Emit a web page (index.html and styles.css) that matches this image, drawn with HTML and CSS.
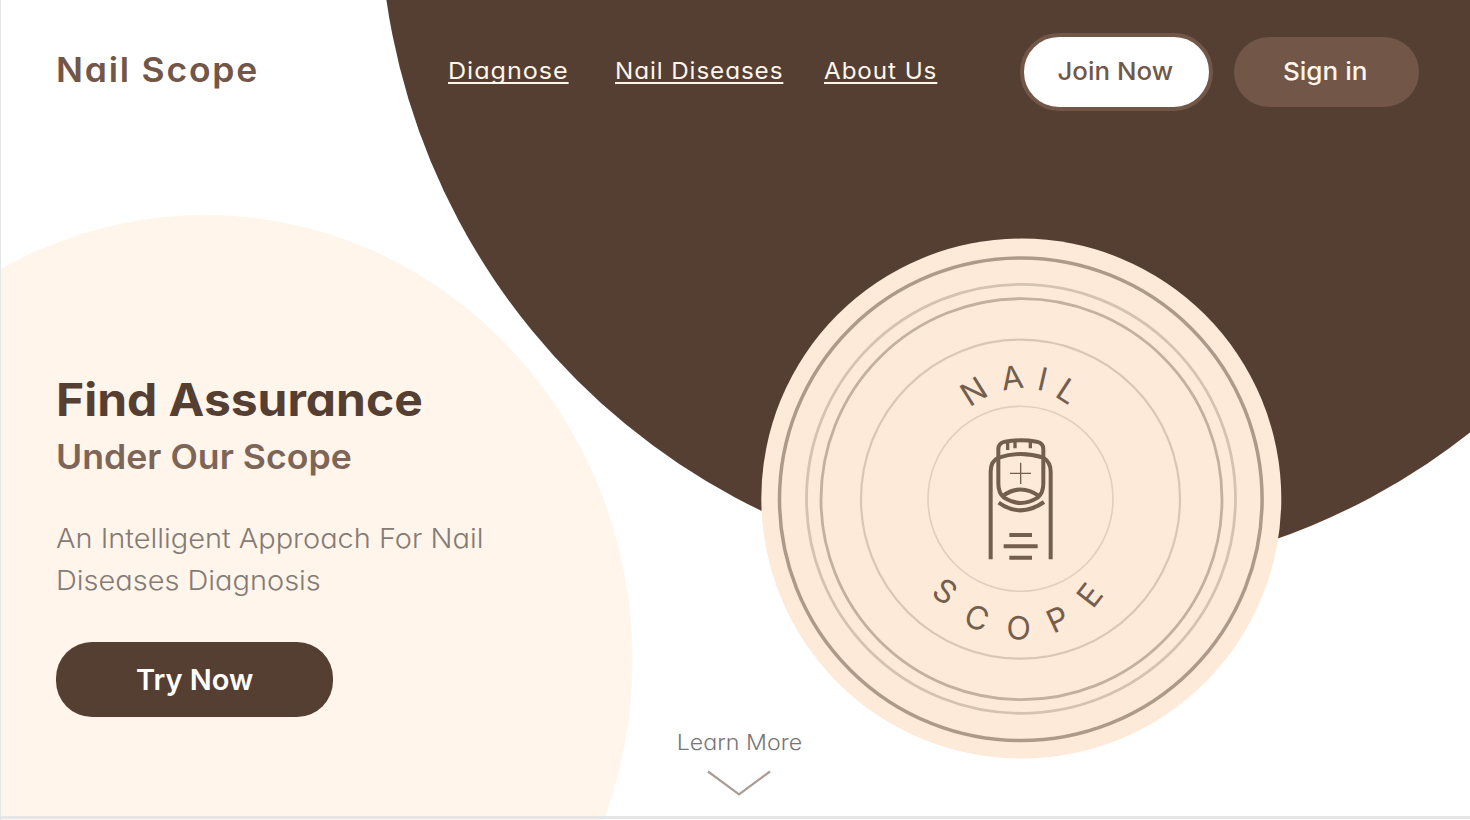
FILE: index.html
```html
<!DOCTYPE html>
<html lang="en">
<head>
<meta charset="utf-8">
<title>Nail Scope</title>
<link rel="stylesheet" href="styles.css">
</head>
<body>
<div class="page">
  <svg class="backdrop" viewBox="0 0 1470 820" aria-hidden="true">
    <ellipse cx="205" cy="660" rx="427.5" ry="445" fill="#fff5ea"/>
    <circle cx="1053" cy="-96.3" r="673.5" fill="#553f32"/>
  </svg>
  <header class="header">
    <a class="brand">Nail Scope</a>
    <nav class="nav">
      <a class="link link-diagnose">Diagnose</a>
      <a class="link link-diseases">Nail Diseases</a>
      <a class="link link-about">About Us</a>
    </nav>
    <div class="actions">
      <button class="btn btn-join"><span class="label label-join">Join Now</span></button>
      <button class="btn btn-sign"><span class="label label-sign">Sign in</span></button>
    </div>
  </header>
  <main class="main">
    <section class="hero">
      <h1 class="title">Find Assurance</h1>
      <h2 class="subtitle">Under Our Scope</h2>
      <p class="lead">An Intelligent Approach For Nail<br>Diseases Diagnosis</p>
      <button class="btn-try"><span class="label label-try">Try Now</span></button>
    </section>
    <a class="more">
      <span class="more-text">Learn More</span>
      <svg class="chevron" width="66" height="28" viewBox="0 0 66 28"><path d="M2 2.5 33 25.5 64 2.5" fill="none" stroke="#aa9d97" stroke-width="2.2"/></svg>
    </a>
    <svg class="seal" width="522" height="522" viewBox="760 238 522 522">
      <circle cx="1021.3" cy="498.6" r="260" fill="#fdead8"/>
      <g fill="none">
        <circle cx="1020.8" cy="499.3" r="241.3" stroke="#ae9a8a" stroke-width="3.5"/>
        <circle cx="1021" cy="498.8" r="214.5" stroke="#d6c2b0" stroke-width="2.8"/>
        <circle cx="1021.5" cy="499.2" r="200.5" stroke="#c4b09e" stroke-width="2.8"/>
        <circle cx="1020.5" cy="499.2" r="159.5" stroke="#d9c7b6" stroke-width="2.2"/>
        <circle cx="1020.5" cy="498.8" r="92.5" stroke="#e0cfbf" stroke-width="1.6"/>
      </g>
      <g class="seal-text">
        <text transform="translate(973.7 391.3) rotate(-32)" y="11.5">N</text>
        <text transform="translate(1012 377.5) rotate(-8)" y="11.5">A</text>
        <text transform="translate(1042.7 379) rotate(13)" y="11.5">I</text>
        <text transform="translate(1067.5 391) rotate(33)" y="11.5">L</text>
        <text transform="translate(945 591.3) rotate(36)" y="11.5">S</text>
        <text transform="translate(977 617.7) rotate(20)" y="11.5">C</text>
        <text transform="translate(1018.7 628) rotate(1)" y="11.5">O</text>
        <text transform="translate(1057.7 619.3) rotate(-25)" y="11.5">P</text>
        <text transform="translate(1089.7 595) rotate(-52)" y="11.5">E</text>
      </g>
      <g transform="translate(970 425) scale(.33333)" fill="none" stroke="#745e4e" stroke-width="12">
        <path d="M62 403V140Q62 108 86 98Q152 76 220 98Q242 112 242 140V403"/>
        <path d="M85 175V72Q85 55 105 50Q152 42 200 50Q220 55 220 72V175Q220 205 203 218Q152 250 102 218Q85 205 85 175Z"/>
        <path d="M98 213Q152 174 207 213M86 233Q152 280 222 231"/>
        <path d="M113 52V75M135 50V70M181 50V70" stroke-width="10"/>
        <path d="M152 113V177M120 145H183" stroke-width="4"/>
        <path d="M118 330H186M101 364H203M118 398H186"/>
      </g>
    </svg>
  </main>
</div>
</body>
</html>
```
FILE: styles.css
```css
* { box-sizing: border-box; }
body { margin: 0; background: #fff; }
.page {
  position: relative;
  width: 1470px;
  height: 820px;
  overflow: hidden;
  border-left: 1px solid #e4e6e8;
  font-family: Inter, "Liberation Sans", sans-serif;
  font-feature-settings: "cv11" 1;
}
.page::after {
  content: "";
  position: absolute;
  left: 0;
  right: 0;
  bottom: 1px;
  height: 3px;
  background: #e6e6e6;
}
.backdrop {
  position: absolute;
  top: 0;
  left: -1px;
  width: 1470px;
  height: 820px;
}
.header {
  position: relative;
  display: flex;
  align-items: flex-start;
  height: 130px;
  padding: 33px 0 0 55px;
}
.brand {
  width: 392px;
  margin-top: 17px;
  font-size: 34px;
  line-height: 40px;
  font-weight: 600;
  letter-spacing: 1.7px;
  color: #725748;
  transform: scaleX(1.045);
  transform-origin: 0 0;
}
.nav { display: flex; width: 572px; margin-top: 22px; }
.link {
  font-size: 23.5px;
  line-height: 32px;
  letter-spacing: .9px;
  color: #fff5ea;
  white-space: nowrap;
  text-decoration: underline;
  text-decoration-thickness: 2px;
  text-underline-offset: 2.5px;
  text-decoration-skip-ink: none;
  transform-origin: 0 0;
}
.link-diagnose { width: 167px; transform: scaleX(1.07); }
.link-diseases { width: 209px; transform: scaleX(1.03); }
.link-about { transform: scaleX(1.03); }
.actions { display: flex; gap: 21px; }
.btn {
  height: 78px;
  padding: 0;
  border: 4px solid #725749;
  border-radius: 39px;
  font: 500 24.5px/68px Inter, sans-serif;
  font-feature-settings: "cv11" 1;
}
.btn-join { width: 193px; background: #fff; color: #725749; }
.btn-sign {
  width: 185px;
  height: 70px;
  margin-top: 4px;
  border: 0;
  background: #725749;
  color: #fff5ea;
}
.label { display: inline-block; }
.label-join { transform: translate(-1.5px, -1px) scaleX(1.055); }
.label-sign { transform: translate(-1.5px, -1px) scaleX(1.065); }
.label-try { transform: translateY(1px) scaleX(1.036); }
.main {
  position: relative;
  display: grid;
  grid-template-columns: 717px 42px 522px;
  height: 690px;
}
.hero { padding: 243px 0 0 55px; }
.title, .subtitle, .lead { transform-origin: 0 0; }
.title {
  margin: 0;
  font-size: 45px;
  line-height: 54px;
  font-weight: 700;
  color: #553f32;
  transform: scaleX(1.066);
}
.subtitle {
  margin: 9px 0 0;
  font-size: 34px;
  line-height: 42px;
  font-weight: 600;
  color: #7d6557;
  transform: scaleX(1.048);
}
.lead {
  margin: 40px 0 0;
  font-size: 27px;
  line-height: 42px;
  font-weight: 300;
  color: #857b76;
  white-space: nowrap;
  transform: scaleX(1.072);
}
.btn-try {
  display: block;
  width: 277px;
  height: 75px;
  margin-top: 40px;
  padding: 0;
  border: 0;
  border-radius: 36px;
  background: #553f32;
  color: #fff;
  font: 600 28px/75px Inter, sans-serif;
}
.more {
  display: flex;
  flex-direction: column;
  align-items: center;
  padding-top: 597px;
  margin: 0 -45px;
}
.more-text {
  font-size: 22px;
  line-height: 30px;
  font-weight: 300;
  color: #777;
  white-space: nowrap;
  transform: scaleX(1.055);
}
.chevron { margin-top: 12px; }
.seal { margin-top: 108px; }
.seal-text {
  font-family: Inter, sans-serif;
  font-size: 32px;
  font-weight: 400;
  text-anchor: middle;
  fill: #745e4e;
}
```
